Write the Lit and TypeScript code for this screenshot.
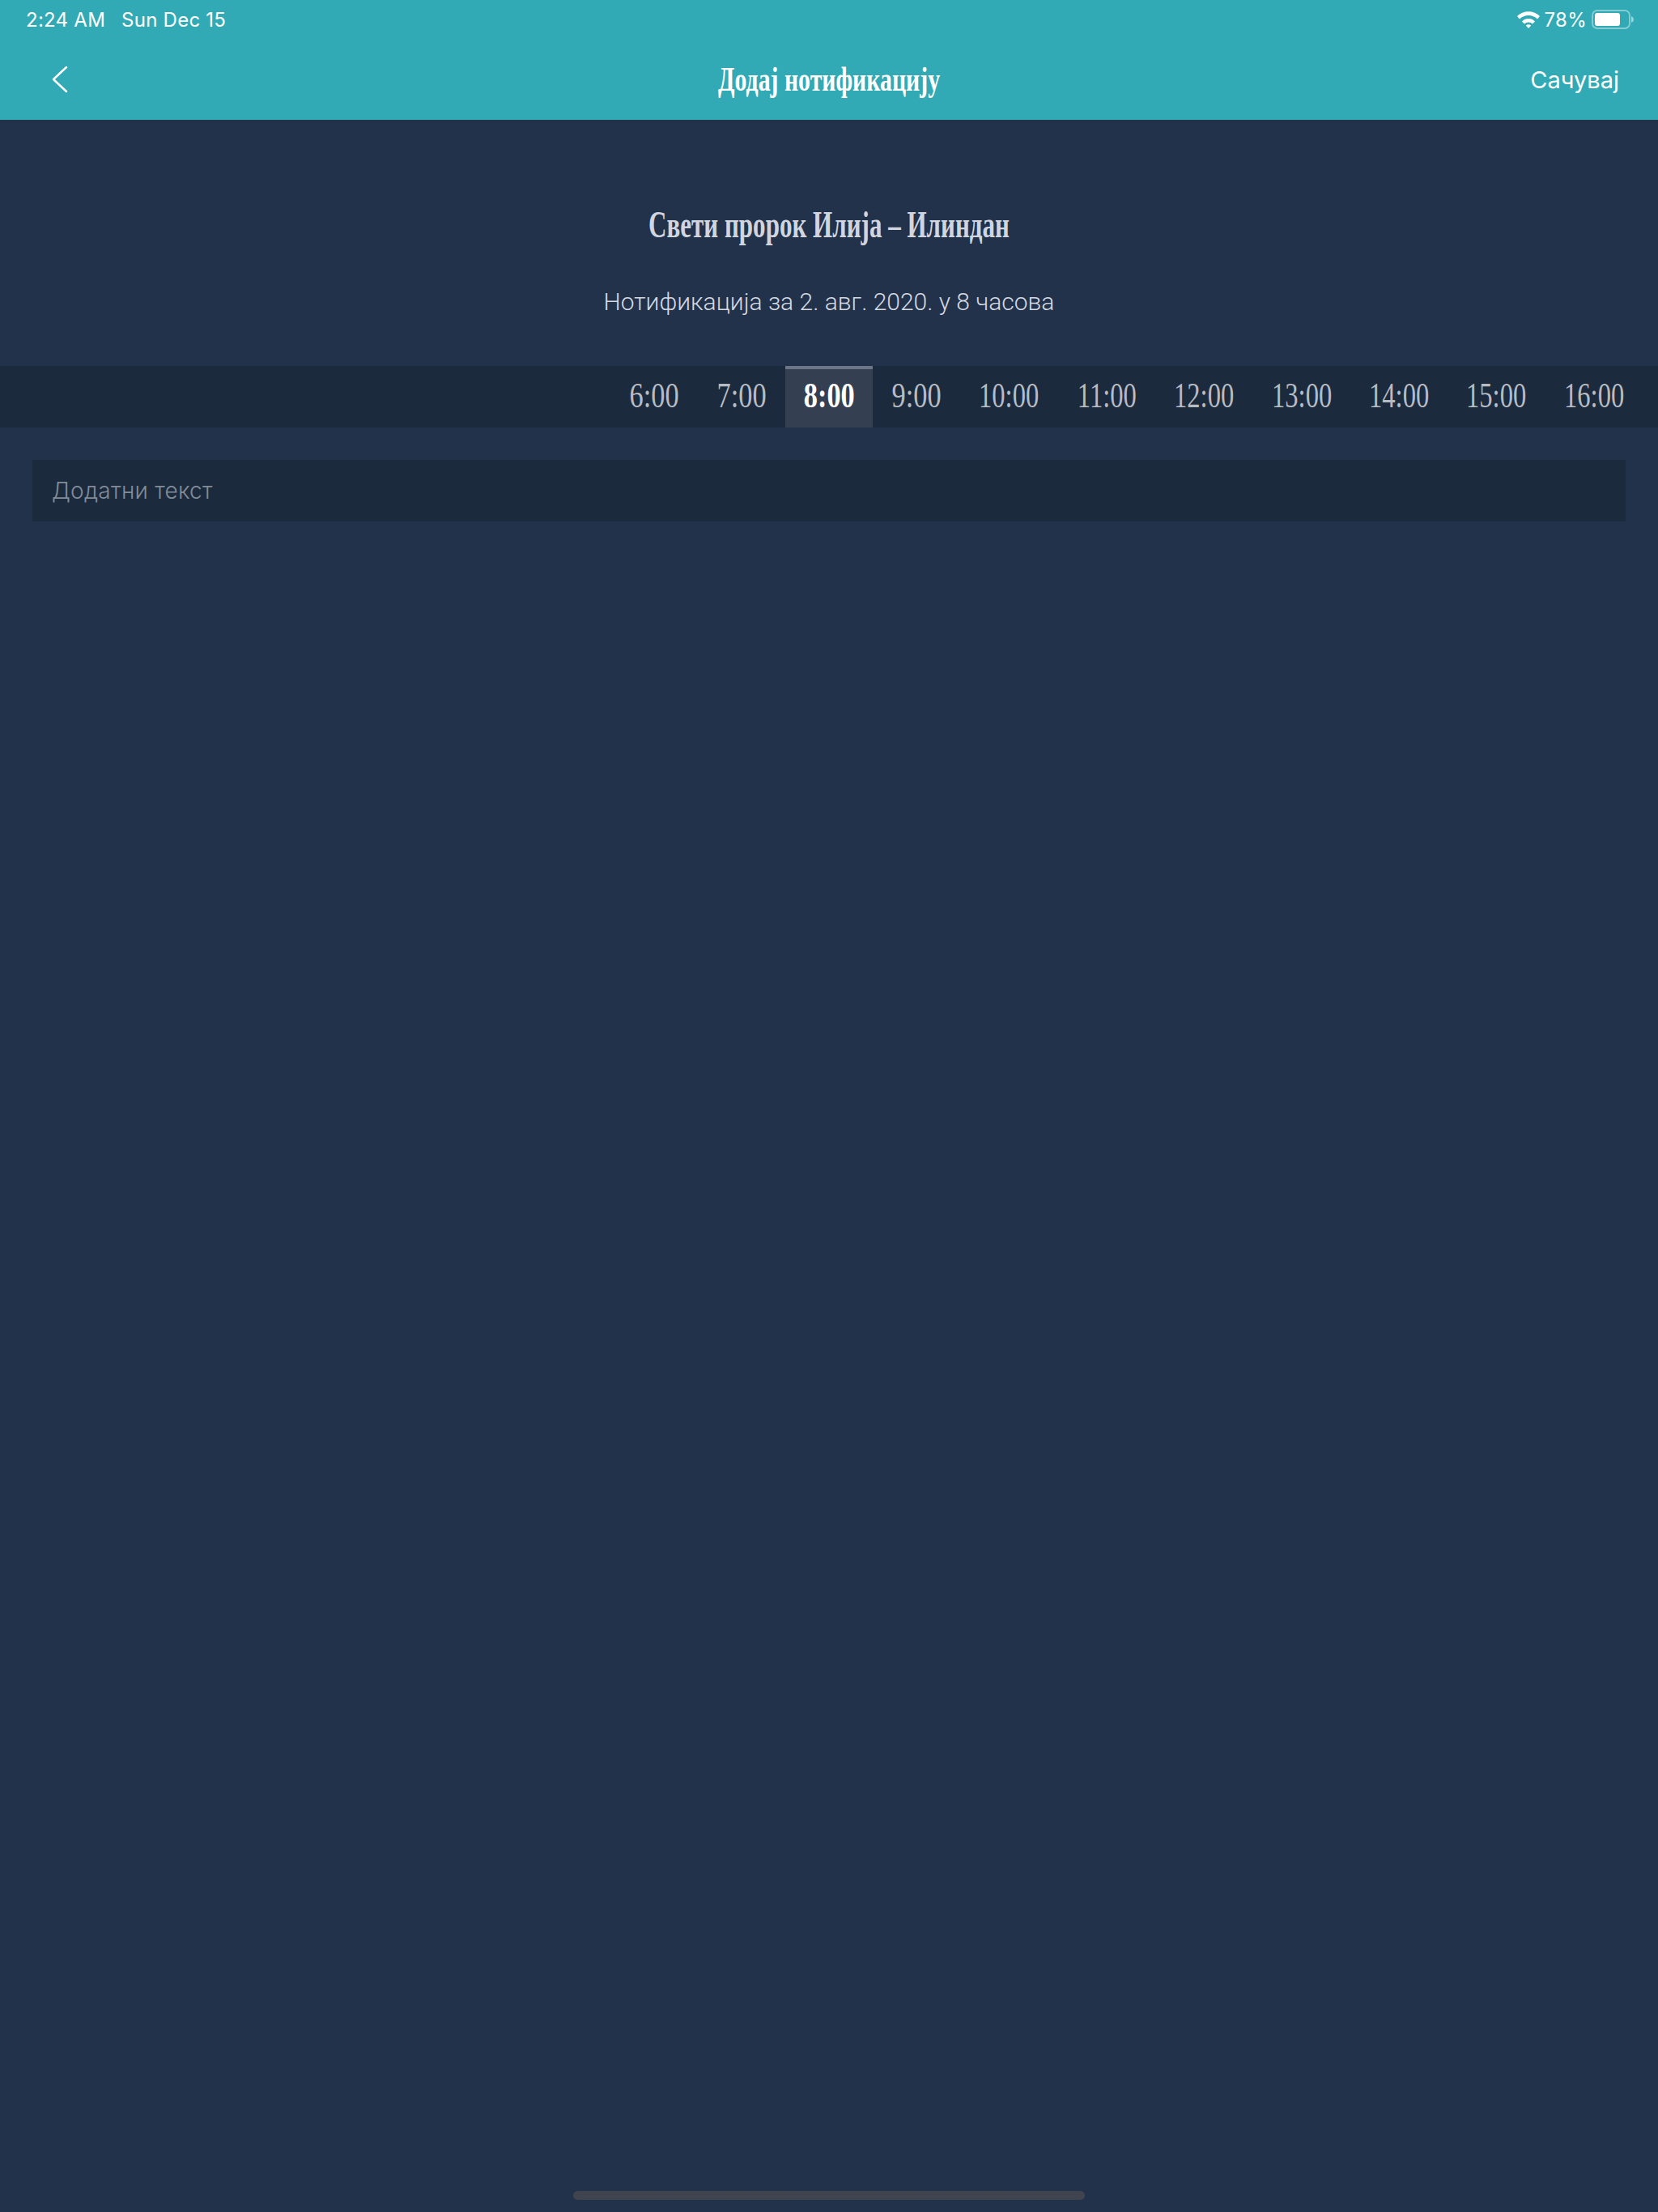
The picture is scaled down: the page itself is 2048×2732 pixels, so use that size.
import { LitElement, html, css, svg } from "lit";
import { customElement } from "lit/decorators.js";

const HOURS = ["6:00","7:00","8:00","9:00","10:00","11:00","12:00","13:00","14:00","15:00","16:00"];

@customElement("app-root")
export class AppRoot extends LitElement {
  static styles = css`
    :host { display: block; width: 2048px; height: 2732px; background: #22324a; font-family: Inter, "Liberation Sans", sans-serif; color: #fff; position: relative; overflow: hidden; }
    .top { height: 148px; background: #31aab6; display: flex; flex-direction: column; }
    .status { height: 48px; display: flex; align-items: center; justify-content: space-between; padding: 0 30px 0 32px; font-size: 24px; letter-spacing: .25px; font-weight: 400; box-sizing: border-box; }
    .status-left { display: flex; gap: 20px; }
    .status-right { display: flex; align-items: center; gap: 6px; }
    .nav { flex: 1; display: grid; grid-template-columns: 1fr auto 1fr; align-items: center; padding: 0 48px; }
    .back { display: block; margin-left: 16px; }
    .title { font-family: "Liberation Serif", serif; font-weight: 700; font-size: 42px; line-height: 48px; text-align: center; transform: scaleX(.71); white-space: nowrap; }
    .save { justify-self: end; font-size: 29px; font-weight: 400; }
    .head { text-align: center; padding-top: 106px; }
    .h1 { font-family: "Liberation Serif", serif; font-weight: 700; font-size: 46px; line-height: 48px; color: #d0d5df; transform: scaleX(.675); white-space: nowrap; }
    .sub { font-family: Roboto, sans-serif; font-weight: 300; font-size: 30px; line-height: 36px; color: #d4d9e2; margin-top: 53px; }
    .strip { margin-top: 61px; height: 76px; background: #1b2a3d; display: flex; justify-content: flex-end; padding-right: 19px; }
    .hour { width: 108px; display: flex; align-items: center; justify-content: center; font-family: "Liberation Serif", serif; font-size: 44px; color: #b7bcc4; box-sizing: border-box; border-top: 4px solid transparent; padding-bottom: 8px; white-space: nowrap; }
    .hour.wide { width: 120.4px; }
    .hour span { display: block; transform: scaleX(.78); }
    .hour.wide span { transform: scaleX(.74); }
    .hour.sel { background: #343f52; border-top-color: #6d7687; color: #fff; font-weight: 700; }
    .field { margin: 40px 40px 0; height: 76px; background: #1b2a3d; display: flex; align-items: center; padding: 0 24px; font-size: 28px; letter-spacing: .25px; font-weight: 300; color: #818c98; }
    .home { position: absolute; left: 708px; top: 2706px; width: 632px; height: 11px; border-radius: 6px; background: #40444f; }
  `;

  render() {
    return html`
      <div class="top">
        <div class="status">
          <div class="status-left"><span>2:24 AM</span><span>Sun Dec 15</span></div>
          <div class="status-right">
            <svg width="28" height="22" viewBox="0 0 28 22">
              <path d="M0 7 A20 20 0 0 1 28 7 L25 10.5 A15.5 15.5 0 0 0 3 10.5 Z" fill="#fff"/>
              <path d="M6 13.5 A11 11 0 0 1 22 13.5 L19 16.5 A7 7 0 0 0 9 16.5 Z" fill="#fff"/>
              <path d="M10.8 18.6 A4.8 4.8 0 0 1 17.2 18.6 L14 22 Z" fill="#fff"/>
            </svg>
            <span>78%</span>
            <svg width="52" height="24" viewBox="0 0 52 24">
              ${svg`<rect x="1" y="1" width="46" height="22" rx="6" fill="none" stroke="#fff" stroke-opacity=".4" stroke-width="2"/>
              <rect x="4" y="4" width="31" height="16" rx="3" fill="#fff"/>
              <path d="M49 8 C51 9 52 10 52 12 C52 14 51 15 49 16 Z" fill="#fff" fill-opacity=".5"/>`}
            </svg>
          </div>
        </div>
        <div class="nav">
          <svg class="back" width="20" height="34" viewBox="0 0 20 34" fill="none" stroke="#fff" stroke-width="2.5" stroke-linecap="round" stroke-linejoin="round"><path d="M18 2 L2 17 L18 32"/></svg>
          <div class="title">Додај нотификацију</div>
          <div class="save">Сачувај</div>
        </div>
      </div>
      <div class="head">
        <div class="h1">Свети пророк Илија – Илиндан</div>
        <div class="sub">Нотификација за 2. авг. 2020. у 8 часова</div>
      </div>
      <div class="strip">
        ${HOURS.map((h) => html`<div class="hour ${h === "8:00" ? "sel" : ""} ${h.length > 4 ? "wide" : ""}"><span>${h}</span></div>`)}
      </div>
      <div class="field">Додатни текст</div>
      <div class="home"></div>
    `;
  }
}
